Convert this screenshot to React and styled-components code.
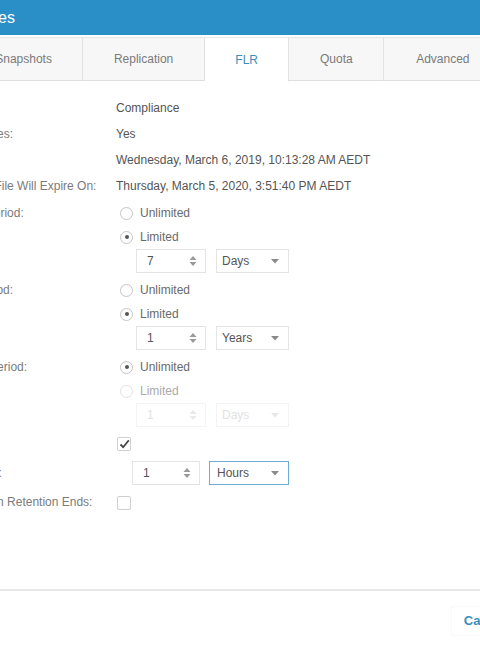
import styled, { createGlobalStyle } from "styled-components";

const GlobalStyle = createGlobalStyle`
  html, body {
    margin: 0;
    padding: 0;
    background: #fff;
    overflow: hidden;
  }

  body {
    width: 480px;
    height: 650px;
    font-family: "Liberation Sans", Arial, sans-serif;
  }
`;

const Dialog = styled.div`
  display: flex;
  flex-direction: column;

  width: 740px;
  height: 650px;
  margin-left: -147px;

  background: #fff;
`;

const Header = styled.div`
  display: flex;
  align-items: center;

  height: 35px;
  padding-left: 1px;

  color: #fff;
  font-size: 16px;
  background: #2a8fc7;
`;

const TabBar = styled.div`
  display: flex;

  height: 44px;
  margin-top: 2px;
  padding-left: 7px;

  border-top: 1px solid #e6e6e6;
  box-sizing: border-box;
  background: #f7f7f7;
`;

const Tab = styled.div`
  display: flex;
  align-items: center;
  justify-content: center;

  padding: 0 30.5px;

  font-size: 12px;
  color: ${(p) => (p.$active ? "#3a8fb8" : "#7a7a7a")};
  background: ${(p) => (p.$active ? "#fff" : "#f7f7f7")};

  border-right: 1px solid #e2e2e2;
  border-bottom: 1px solid ${(p) => (p.$active ? "#fff" : "#dedede")};
  margin-bottom: ${(p) => (p.$active ? "-1px" : "0")};

  &:last-child {
    flex: 1;
    justify-content: flex-start;
    padding-left: 32px;
  }
`;

const Body = styled.div`
  flex: 1;
  padding: 14px 22px 0 26px;
`;

const Row = styled.div`
  display: grid;
  grid-template-columns: 237px 1fr;
  align-items: start;

  padding: ${(p) => p.$pad || "0"};
`;

const Label = styled.div`
  font-size: 12px;
  line-height: ${(p) => p.$lh || "26px"};
  color: #7b7b7b;
  white-space: nowrap;
`;

const Value = styled.div`
  font-size: 12px;
  line-height: 26px;
  color: #555;
  white-space: nowrap;
`;

const OptionGroup = styled.div`
  display: flex;
  flex-direction: column;
  padding-left: 4px;
`;

const RadioLine = styled.label`
  display: flex;
  align-items: center;
  gap: 7px;

  height: 24px;

  font-size: 12px;
  color: ${(p) => (p.$dim ? "#aaa" : "#6a6a6a")};
`;

const RadioCircle = styled.span`
  position: relative;
  width: 11px;
  height: 11px;

  border: 1px solid ${(p) => (p.$dim ? "#e2e2e2" : "#c4c4c4")};
  border-radius: 50%;
  background: #fff;

  &::after {
    content: "";
    display: ${(p) => (p.$checked ? "block" : "none")};
    position: absolute;
    left: 3.5px;
    top: 3.5px;
    width: 4px;
    height: 4px;
    border-radius: 50%;
    background: #555;
  }
`;

const Controls = styled.div`
  display: flex;
  gap: ${(p) => p.$gap || "10px"};
  padding-left: ${(p) => p.$indent || "16px"};
`;

const Spinner = styled.div`
  display: flex;
  align-items: center;
  justify-content: space-between;

  width: ${(p) => p.$w || "70px"};
  height: 24px;
  padding: 0 8px 0 10px;
  box-sizing: border-box;

  border: 1px solid ${(p) => (p.$disabled ? "#f3f3f3" : "#e4e4e4")};

  font-size: 12px;
  color: ${(p) => (p.$disabled ? "#e2e2e2" : "#555")};

  svg path {
    fill: ${(p) => (p.$disabled ? "#e8e8e8" : "#9a9a9a")};
  }
`;

const Select = styled.div`
  display: flex;
  align-items: center;
  justify-content: space-between;

  width: ${(p) => p.$w || "73px"};
  height: 24px;
  padding: 0 9px 0 ${(p) => p.$pl || "5px"};
  box-sizing: border-box;

  border: 1px solid
    ${(p) => (p.$focus ? "#6aaed8" : p.$disabled ? "#f3f3f3" : "#e4e4e4")};

  font-size: 12px;
  color: ${(p) => (p.$disabled ? "#e2e2e2" : "#555")};

  svg path {
    fill: ${(p) => (p.$disabled ? "#e8e8e8" : "#8a8a8a")};
  }
`;

const Check = styled.span`
  display: flex;
  align-items: center;
  justify-content: center;

  width: 12px;
  height: 12px;
  margin: 7px 0 0 1px;

  border: 1px solid #cfcfcf;
  border-radius: 2px;
  background: #fff;
`;

const Footer = styled.div`
  display: flex;
  align-items: center;
  justify-content: flex-end;
  gap: 8px;

  height: 59px;
  padding-right: 20px;

  border-top: 2px solid #e8e8e8;
`;

const Button = styled.button`
  height: 30px;
  padding: 0 12px;

  border: 1px dotted #f1f5f8;
  background: #fff;

  font-family: inherit;
  font-size: 13px;
  font-weight: bold;
  color: #3b8ec2;
`;

function Arrows() {
  return (
    <svg width="8" height="12" viewBox="0 0 8 12">
      <path d="M4 1 L7.5 5 L0.5 5 Z" />
      <path d="M0.5 7 L7.5 7 L4 11 Z" />
    </svg>
  );
}

function Caret() {
  return (
    <svg width="8" height="5" viewBox="0 0 8 5">
      <path d="M0 0 L8 0 L4 4.5 Z" />
    </svg>
  );
}

function Radio({ checked, dim, children }) {
  return (
    <RadioLine $dim={dim}>
      <RadioCircle $checked={checked} $dim={dim} />
      {children}
    </RadioLine>
  );
}

function PeriodField({ label, limited, amount, unit, disabled }) {
  return (
    <Row $pad="2px 0 3px">
      <Label $lh="24px">{label}</Label>
      <OptionGroup>
        <Radio checked={!limited}>Unlimited</Radio>
        <Radio checked={limited} dim={disabled}>
          Limited
        </Radio>
        <Controls>
          <Spinner $disabled={disabled}>
            {amount}
            <Arrows />
          </Spinner>
          <Select $disabled={disabled}>
            {unit}
            <Caret />
          </Select>
        </Controls>
      </OptionGroup>
    </Row>
  );
}

export default function App() {
  return (
    <>
      <GlobalStyle />
      <Dialog>
        <Header>File System Properties</Header>
        <TabBar>
          <Tab>General</Tab>
          <Tab>Snapshots</Tab>
          <Tab>Replication</Tab>
          <Tab $active>FLR</Tab>
          <Tab>Quota</Tab>
          <Tab>Advanced</Tab>
        </TabBar>
        <Body>
          <Row>
            <Label>File-level Retention:</Label>
            <Value>Compliance</Value>
          </Row>
          <Row>
            <Label>Contains Protected Files:</Label>
            <Value>Yes</Value>
          </Row>
          <Row>
            <Label>FLR Clock Time:</Label>
            <Value>Wednesday, March 6, 2019, 10:13:28 AM AEDT</Value>
          </Row>
          <Row>
            <Label>Date When a Locked File Will Expire On:</Label>
            <Value>Thursday, March 5, 2020, 3:51:40 PM AEDT</Value>
          </Row>
          <PeriodField
            label="Minimum Retention Period:"
            limited
            amount="7"
            unit="Days"
          />
          <PeriodField
            label="Default Retention Period:"
            limited
            amount="1"
            unit="Years"
          />
          <PeriodField
            label="Maximum Retention Period:"
            amount="1"
            unit="Days"
            disabled
          />
          <Row>
            <Label>Auto-lock New Files:</Label>
            <div>
              <Check>
                <svg width="11" height="10" viewBox="0 0 11 10">
                  <path
                    d="M1.5 5.5 L4.2 8.2 L9.8 1.2"
                    fill="none"
                    stroke="#444"
                    strokeWidth="1.8"
                  />
                </svg>
              </Check>
            </div>
          </Row>
          <Row $pad="5px 0 2px">
            <Label $lh="24px">Locking Policy Interval:</Label>
            <Controls $indent="16px" $gap="9px">
              <Spinner $w="68px">
                1
                <Arrows />
              </Spinner>
              <Select $w="80px" $pl="7px" $focus>
                Hours
                <Caret />
              </Select>
            </Controls>
          </Row>
          <Row $pad="2px 0 0">
            <Label>Auto-delete Files When Retention Ends:</Label>
            <div>
              <Check />
            </div>
          </Row>
        </Body>
        <Footer>
          <Button>Cancel</Button>
          <Button>OK</Button>
        </Footer>
      </Dialog>
    </>
  );
}
